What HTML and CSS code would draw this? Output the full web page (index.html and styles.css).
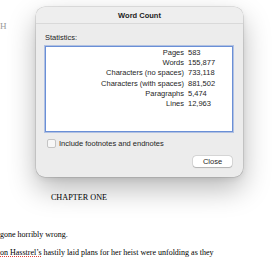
FILE: index.html
```html
<!DOCTYPE html>
<html lang="en">
  <head>
    <meta charset="UTF-8" />
    <meta name="viewport" content="width=device-width, initial-scale=1.0" />
    <link rel="stylesheet" href="styles.css">
  </head>
  <body>
    <div class="document">
      <div class="running">H</div>
      <h1 class="heading">CHAPTER ONE</h1>
      <p class="line">gone horribly wrong.</p>
      <p class="line"><span class="misspelled">on Hasstrel’s</span> hastily laid plans for her heist were unfolding as they</p>
    </div>

    <div class="dialog">
      <div class="titlebar">Word Count</div>
      <div class="dialog-body">
        <div class="section-label">Statistics:</div>
        <div class="stats">
          <span class="stat-name">Pages</span><span class="stat-value">583</span>
          <span class="stat-name">Words</span><span class="stat-value">155,877</span>
          <span class="stat-name">Characters (no spaces)</span><span class="stat-value">733,118</span>
          <span class="stat-name">Characters (with spaces)</span><span class="stat-value">881,502</span>
          <span class="stat-name">Paragraphs</span><span class="stat-value">5,474</span>
          <span class="stat-name">Lines</span><span class="stat-value">12,963</span>
        </div>
        <label class="option">
          <span class="checkbox"></span>
          <span>Include footnotes and endnotes</span>
        </label>
        <div class="actions">
          <button type="button" class="button">Close</button>
        </div>
      </div>
    </div>
  </body>
</html>
```

FILE: styles.css
```css
html,
body {
  width: 280px;
  height: 280px;
}

body {
  margin: 0;
  position: relative;
  overflow: hidden;
  background: #ffffff;
  font-family: "Liberation Serif", "Times New Roman", serif;
  font-size: 8px;
  color: #000000;
}

/* Document behind the sheet */

.document {
  padding-top: 21px;
}

.running {
  font-size: 9px;
  line-height: 10px;
  color: #9a9a9a;
}

.heading {
  margin: 162px 0 0;
  width: 158px;
  font-size: 8.2px;
  font-weight: normal;
  line-height: 10px;
  text-align: center;
}

.line {
  margin: 8px 0 0;
  line-height: 10px;
  white-space: nowrap;
}

.heading + .line {
  margin-top: 27px;
}

.misspelled {
  text-decoration: underline dotted #e0413a;
  text-decoration-thickness: 1px;
  text-underline-offset: 1px;
}

/* Word count sheet */

.dialog {
  position: absolute;
  top: 7px;
  left: 36px;
  width: 207px;
  height: 170px;
  box-sizing: border-box;
  display: flex;
  flex-direction: column;
  background: #ececec;
  border-radius: 9px;
  box-shadow: 0 0 0 0.5px rgba(0, 0, 0, 0.18), 0 12px 28px rgba(0, 0, 0, 0.28),
    0 2px 6px rgba(0, 0, 0, 0.08);
  font-family: "Liberation Sans", Arial, sans-serif;
  font-size: 7.5px;
  color: #1e1e1e;
  overflow: hidden;
}

.titlebar {
  height: 16px;
  line-height: 17px;
  text-align: center;
  font-weight: bold;
  color: #222222;
  border-bottom: 1px solid #d9d9d9;
  background: #eeeeee;
}

.dialog-body {
  flex: 1;
  display: flex;
  flex-direction: column;
  padding: 9px 10px 10px 9px;
}

.section-label {
  line-height: 10px;
  margin-bottom: 3px;
}

.stats {
  height: 86px;
  box-sizing: border-box;
  display: grid;
  grid-template-columns: 138px 1fr;
  grid-auto-rows: 10.2px;
  column-gap: 4px;
  align-content: start;
  padding-top: 1px;
  background: #ffffff;
  border: 1px solid #6a8fd6;
  box-shadow: 0 0 0 1px rgba(106, 143, 214, 0.45);
  line-height: 10.2px;
}

.stat-name {
  text-align: right;
}

.option {
  display: flex;
  align-items: center;
  gap: 3px;
  margin: 7px 0 0 2px;
  line-height: 8px;
}

.checkbox {
  width: 7px;
  height: 7px;
  background: #f7f7f7;
  border: 0.5px solid #c4c4c4;
  border-radius: 2px;
}

.actions {
  margin-top: auto;
  display: flex;
  justify-content: flex-end;
  padding-right: 1px;
}

.button {
  width: 39px;
  height: 11px;
  padding: 0;
  border: none;
  border-radius: 3px;
  background: #ffffff;
  box-shadow: 0 0 0 0.5px rgba(0, 0, 0, 0.16), 0 0.5px 1px rgba(0, 0, 0, 0.18);
  font: inherit;
  line-height: 11px;
  color: #1e1e1e;
}
```
